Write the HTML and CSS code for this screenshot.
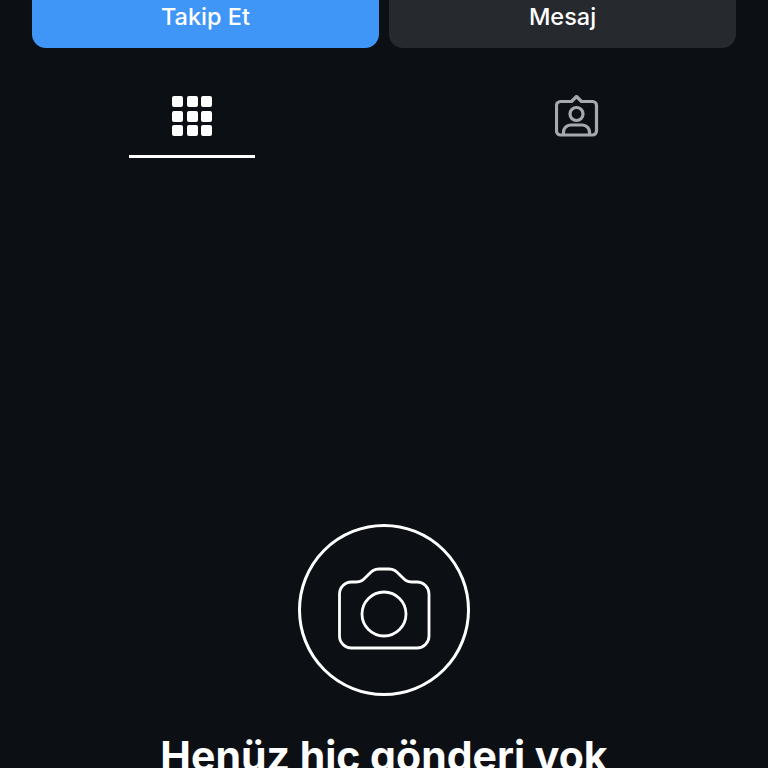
FILE: index.html
```html
<!DOCTYPE html>
<html>
   <head>
      <meta name="viewport" content="width=device-width, initial-scale=1.0"/>
      <link rel="stylesheet" href="styles.css">
   </head>
   <body>
      <!--follow and message buttons-->
      <div class="actions">
         <button class="btn btn-follow">Takip Et</button>
         <button class="btn btn-message">Mesaj</button>
      </div>
      <!--profile tabs-->
      <div class="tabs">
         <div class="tab tab-active">
            <div class="grid-icon">
               <span></span><span></span><span></span>
               <span></span><span></span><span></span>
               <span></span><span></span><span></span>
            </div>
         </div>
         <div class="tab">
            <svg class="tag-icon" width="44" height="42" viewBox="0 0 44 42" fill="none" stroke="#a6a9ae" stroke-width="3.2" stroke-linejoin="round">
               <path d="M5.500 6.500H16.500L21.500 1.500L26.500 6.500H37.500A4 4 0 0 1 41.500 10.500V36A4 4 0 0 1 37.500 40H5.500A4 4 0 0 1 1.500 36V10.500A4 4 0 0 1 5.500 6.500Z"/>
               <circle cx="21.500" cy="19" r="6.500"/>
               <path d="M8.500 39.500V37A7 7 0 0 1 15.500 30H27.500A7 7 0 0 1 34.500 37V39.500"/>
            </svg>
         </div>
      </div>
      <!--empty state-->
      <div class="empty">
         <div class="camera-ring">
            <svg class="camera-icon" width="96" height="85" viewBox="0 0 96 85" fill="none" stroke="#fff" stroke-width="2.800">
               <path d="M3.500 28A12 12 0 0 1 15.500 16H20C26 16 28 13 32 9C36 5 38 3 43 3H53C58 3 60 5 64 9C68 13 70 16 76 16H81A12 12 0 0 1 93 28V70A12 12 0 0 1 81 82H15.500A12 12 0 0 1 3.500 70Z"/>
               <circle cx="48" cy="48" r="22"/>
            </svg>
         </div>
         <h2 class="empty-title">Henüz hiç gönderi yok</h2>
      </div>
   </body>
</html>
```

FILE: styles.css
```css
html, body {
height: 768px;
overflow: hidden;
}
body {
margin: 0;
background-color: #0c1014;
font-family: "Inter", "Liberation Sans", sans-serif;
color: white;
}
.actions {
display: flex;
gap: 10px;
padding: 0 32px;
margin-top: -14px;
}
.btn {
flex: 1;
height: 62px;
padding: 0 0 2px;
border: none;
border-radius: 14px;
color: white;
font-family: inherit;
font-size: 23.5px;
font-weight: 500;
}
.btn-follow {
background-color: #4096f7;
}
.btn-message {
background-color: #26292e;
}
.tabs {
display: grid;
grid-template-columns: 1fr 1fr;
margin-top: 48px;
}
.tab {
display: flex;
flex-direction: column;
align-items: center;
}
.tab-active::after {
content: "";
width: 126px;
height: 3px;
margin-top: 19px;
background-color: white;
}
.tag-icon {
margin-left: 1px;
margin-top: -1px;
}
.grid-icon {
display: grid;
grid-template-columns: repeat(3, 11px);
gap: 3.5px;
}
.grid-icon span {
height: 11px;
border-radius: 2px;
background-color: white;
}
.empty {
display: flex;
flex-direction: column;
align-items: center;
margin-top: 366px;
}
.camera-ring {
display: flex;
align-items: center;
justify-content: center;
box-sizing: border-box;
width: 172px;
height: 172px;
border: 3px solid white;
border-radius: 50%;
}
.camera-icon {
margin-bottom: 3px;
}
.empty-title {
margin: 38px 0 0;
font-size: 41px;
font-weight: 700;
line-height: 44px;
white-space: nowrap;
}
```
